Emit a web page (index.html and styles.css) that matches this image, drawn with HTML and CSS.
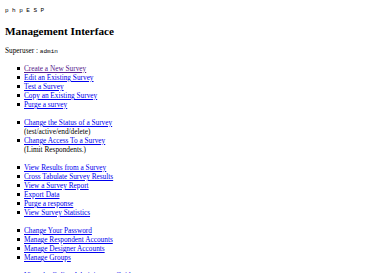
FILE: index.html
```html
<!DOCTYPE html>
<html>
<head>
<meta charset="utf-8">
<link rel="stylesheet" href="styles.css">
</head>
<body>
<div class="logo">phpESP</div>
<h2 class="title">Management Interface</h2>
<div class="user">Superuser : <span class="mono">admin</span></div>
<ul class="menu">
<li><a class="visited" href="#">Create a New Survey</a></li>
<li><a href="#">Edit an Existing Survey</a></li>
<li><a href="#">Test a Survey</a></li>
<li><a href="#">Copy an Existing Survey</a></li>
<li><a href="#">Purge a survey</a></li>
</ul>
<ul class="menu">
<li><a href="#">Change the Status of a Survey</a><br>(test/active/end/delete)</li>
<li><a href="#">Change Access To a Survey</a><br>(Limit Respondents.)</li>
</ul>
<ul class="menu">
<li><a href="#">View Results from a Survey</a></li>
<li><a href="#">Cross Tabulate Survey Results</a></li>
<li><a href="#">View a Survey Report</a></li>
<li><a href="#">Export Data</a></li>
<li><a href="#">Purge a response</a></li>
<li><a href="#">View Survey Statistics</a></li>
</ul>
<ul class="menu">
<li><a href="#">Change Your Password</a></li>
<li><a href="#">Manage Respondent Accounts</a></li>
<li><a href="#">Manage Designer Accounts</a></li>
<li><a href="#">Manage Groups</a></li>
</ul>
<ul class="menu">
<li><a href="#">View the Online Administrator Guide</a></li>
</ul>
</body>
</html>
```
FILE: styles.css
```css
html, body {
  background: #ffffff;
}
body {
  margin: 0;
  padding: 5px 5px 0 5px;
  font-family: "Liberation Serif", "Times New Roman", serif;
  font-size: 7.3px;
  line-height: 9px;
  color: #000000;
}
.logo {
  font-family: "Liberation Mono", monospace;
  font-size: 6px;
  letter-spacing: 3.5px;
  line-height: 8px;
  margin-top: 2px;
}
.title {
  font-family: "Liberation Serif", "Times New Roman", serif;
  font-size: 11.2px;
  line-height: 14px;
  font-weight: bold;
  margin: 9px 0 0 0;
}
.user {
  margin-top: 8px;
}
.mono {
  font-family: "Liberation Mono", monospace;
  font-size: 6px;
}
.menu {
  margin: 8px 0 0 0;
  padding-left: 19px;
  list-style: none;
}
.menu + .menu {
  margin-top: 9px;
}
.menu li {
  position: relative;
}
.menu li::before {
  content: "";
  position: absolute;
  left: -7px;
  top: 3px;
  width: 3px;
  height: 3px;
  background: #000000;
}
a {
  color: #0000ee;
}
a.visited {
  color: #551a8b;
}
```
